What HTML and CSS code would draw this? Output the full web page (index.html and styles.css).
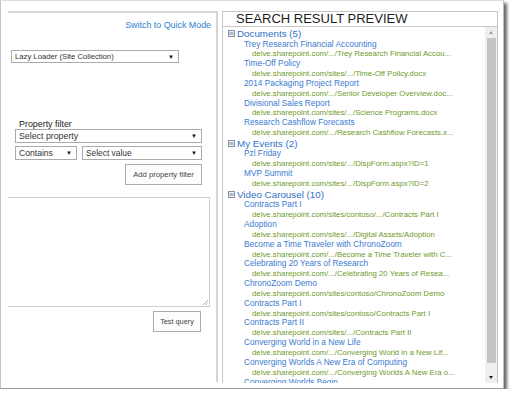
FILE: index.html
```html
<!DOCTYPE html>
<html>
	<head>
		<meta charset="utf-8">
		<meta name="viewport" content="width=device-width, initial-scale=1.0">
		<title>Query builder</title>
		<link rel="stylesheet" href="styles.css">
	</head>
	<body>
		<div class="frame">
			<div class="builder">
				<a class="switch" href="#">Switch to Quick Mode</a>
				<div class="select source"><span>Lazy Loader (Site Collection)</span><i>&#9660;</i></div>

				<div class="filter-label">Property filter</div>
				<div class="select prop"><span>Select property</span><i>&#9660;</i></div>
				<div class="filter-row">
					<div class="select op"><span>Contains</span><i>&#9660;</i></div>
					<div class="select val"><span>Select value</span><i>&#9660;</i></div>
				</div>
				<div class="btn-row"><button type="button" class="btn add">Add property filter</button></div>

				<div class="query">
					<svg class="grip" width="7" height="7" viewBox="0 0 7 7"><path d="M6 1L1 6M6 3.5L3.5 6" stroke="#999" stroke-width="0.8"/></svg>
				</div>
				<div class="btn-row test"><button type="button" class="btn">Test query</button></div>
			</div>

			<div class="preview">
				<div class="preview-title">SEARCH RESULT PREVIEW</div>
				<div class="preview-body">
					<div class="results">
						<div class="group"><svg width="7" height="7" viewBox="0 0 7 7"><rect x="0.5" y="0.5" width="6" height="6" fill="#eef1f5" stroke="#8593a3"/><path d="M1.5 2.5H5.5M1.5 3.5H5.5M1.5 4.5H5.5" stroke="#8593a3" stroke-width="0.6"/></svg>Documents (5)</div>
						<div class="title">Trey Research Financial Accounting</div>
						<div class="url">delve.sharepoint.com/.../Trey Research Financial Accou...</div>
						<div class="title">Time-Off Policy</div>
						<div class="url">delve.sharepoint.com/sites/.../Time-Off Policy.docx</div>
						<div class="title">2014 Packaging Project Report</div>
						<div class="url">delve.sharepoint.com/.../Senior Developer Overview.doc...</div>
						<div class="title">Divisional Sales Report</div>
						<div class="url">delve.sharepoint.com/sites/.../Science Programs.docx</div>
						<div class="title">Research Cashflow Forecasts</div>
						<div class="url">delve.sharepoint.com/.../Research Cashflow Forecasts.x...</div>

						<div class="group"><svg width="7" height="7" viewBox="0 0 7 7"><rect x="0.5" y="0.5" width="6" height="6" fill="#eef1f5" stroke="#8593a3"/><path d="M1.5 2.5H5.5M1.5 3.5H5.5M1.5 4.5H5.5" stroke="#8593a3" stroke-width="0.6"/></svg>My Events (2)</div>
						<div class="title">Pzl Friday</div>
						<div class="url">delve.sharepoint.com/sites/.../DispForm.aspx?ID=1</div>
						<div class="title">MVP Summit</div>
						<div class="url">delve.sharepoint.com/sites/.../DispForm.aspx?ID=2</div>

						<div class="group"><svg width="7" height="7" viewBox="0 0 7 7"><rect x="0.5" y="0.5" width="6" height="6" fill="#eef1f5" stroke="#8593a3"/><path d="M1.5 2.5H5.5M1.5 3.5H5.5M1.5 4.5H5.5" stroke="#8593a3" stroke-width="0.6"/></svg>Video Carousel (10)</div>
						<div class="title">Contracts Part I</div>
						<div class="url">delve.sharepoint.com/sites/contoso/.../Contracts Part I</div>
						<div class="title">Adoption</div>
						<div class="url">delve.sharepoint.com/sites/.../Digital Assets/Adoption</div>
						<div class="title">Become a Time Traveler with ChronoZoom</div>
						<div class="url">delve.sharepoint.com/.../Become a Time Traveler with C...</div>
						<div class="title">Celebrating 20 Years of Research</div>
						<div class="url">delve.sharepoint.com/.../Celebrating 20 Years of Resea...</div>
						<div class="title">ChronoZoom Demo</div>
						<div class="url">delve.sharepoint.com/sites/contoso/ChronoZoom Demo</div>
						<div class="title">Contracts Part I</div>
						<div class="url">delve.sharepoint.com/sites/contoso/Contracts Part I</div>
						<div class="title">Contracts Part II</div>
						<div class="url">delve.sharepoint.com/sites/.../Contracts Part II</div>
						<div class="title">Converging World in a New Life</div>
						<div class="url">delve.sharepoint.com/.../Converging World in a New Lif...</div>
						<div class="title">Converging Worlds A New Era of Computing</div>
						<div class="url">delve.sharepoint.com/.../Converging Worlds A New Era o...</div>
						<div class="title">Converging Worlds Begin</div>
					</div>
					<div class="scrollbar">
						<div class="arrow up"></div>
						<div class="thumb"></div>
						<div class="arrow down"></div>
					</div>
				</div>
			</div>
		</div>
	</body>
</html>
```

FILE: styles.css
```css
body{
	margin: 0;
	background: #fff;
	font-family: "Liberation Sans", Arial, sans-serif;
}
.frame{
	box-sizing: border-box;
	width: 504px;
	height: 389px;
	display: flex;
	gap: 4px;
	padding: 10px 0 0 7px;
	border-left: 1px solid #c4c4c4;
	border-top: 1px solid #dedede;
	border-right: 1px solid #bdbdbd;
	border-bottom: 1px solid #9a9a9a;
	box-shadow: 3px 3px 3px rgba(0,0,0,0.6);
	background: #fff;
}

/* 左侧查询构建 */
.builder{
	box-sizing: border-box;
	width: 210px;
	height: 371px;
	border-top: 2px solid #d6d6d6;
	border-right: 2px solid #d6d6d6;
	display: flex;
	flex-direction: column;
}
.switch{
	align-self: flex-end;
	margin: 6px 5px 0 0;
	font-size: 8.9px;
	line-height: 12px;
	color: #2d80cf;
	text-decoration: none;
}
.select{
	box-sizing: border-box;
	display: flex;
	align-items: center;
	justify-content: space-between;
	border: 1px solid #ababab;
	background: #fff;
	color: #333;
	padding: 0 4px 0 3px;
}
.select i{
	font-style: normal;
	font-size: 6px;
	color: #111;
}
.source{
	width: 168px;
	height: 13px;
	margin: 19px 0 0 3px;
	font-size: 7.7px;
}
.filter-label{
	margin: 56px 0 0 11px;
	font-size: 8.9px;
	line-height: 10px;
	color: #222;
}
.prop{
	width: 187px;
	height: 14px;
	margin: 0 0 0 7px;
	font-size: 8.8px;
}
.filter-row{
	display: flex;
	gap: 5px;
	margin: 3px 0 0 7px;
}
.op{
	width: 62px;
	height: 14px;
	font-size: 8.6px;
}
.val{
	width: 120px;
	height: 14px;
	font-size: 8.4px;
}
.btn-row{
	display: flex;
	justify-content: flex-end;
	padding-right: 14px;
	margin-top: 4px;
}
.btn{
	box-sizing: border-box;
	height: 21px;
	border: 1px solid #ababab;
	background: #fdfdfd;
	color: #444;
	font-family: inherit;
	font-size: 7.7px;
	padding: 0;
}
.add{
	width: 77px;
}
.query{
	position: relative;
	box-sizing: border-box;
	width: 202px;
	height: 110px;
	margin-top: 12px;
	border: 1px solid #cfcfcf;
	border-left: none;
}
.grip{
	position: absolute;
	right: 0;
	bottom: 0;
}
.test{
	padding-right: 15px;
}
.test .btn{
	width: 48px;
	font-size: 7.3px;
}

/* 右侧结果预览 */
.preview{
	box-sizing: border-box;
	width: 276px;
	height: 372px;
	border: 1px solid #c8c8c8;
	border-bottom: none;
	display: flex;
	flex-direction: column;
}
.preview-title{
	height: 14px;
	line-height: 14px;
	padding-left: 13px;
	font-size: 13px;
	color: #1e1e1e;
	border-bottom: 1px solid #c8c8c8;
}
.preview-body{
	flex: 1;
	display: flex;
	min-height: 0;
}
.results{
	flex: 1;
	overflow: hidden;
	padding-top: 1px;
	white-space: nowrap;
}
.group{
	display: flex;
	align-items: center;
	gap: 2px;
	padding-left: 5px;
	font-size: 9.8px;
	line-height: 11.5px;
	color: #2f6fc6;
}
.title{
	padding-left: 21px;
	font-size: 8.3px;
	line-height: 9.85px;
	color: #3a7bd0;
}
.url{
	padding-left: 29px;
	font-size: 7.8px;
	line-height: 9.85px;
	color: #6f9a2a;
}
.scrollbar{
	width: 12px;
	display: flex;
	flex-direction: column;
	background: #efefef;
}
.arrow{
	height: 11px;
	display: flex;
	align-items: center;
	justify-content: center;
}
.arrow::after{
	content: '';
	border-left: 2.5px solid transparent;
	border-right: 2.5px solid transparent;
}
.up::after{
	border-bottom: 3px solid #9a9a9a;
}
.down{
	margin-top: auto;
}
.down::after{
	border-top: 3px solid #222;
}
.thumb{
	height: 325px;
	margin-left: 2px;
	width: 9px;
	background: #c4c4c4;
}
```
